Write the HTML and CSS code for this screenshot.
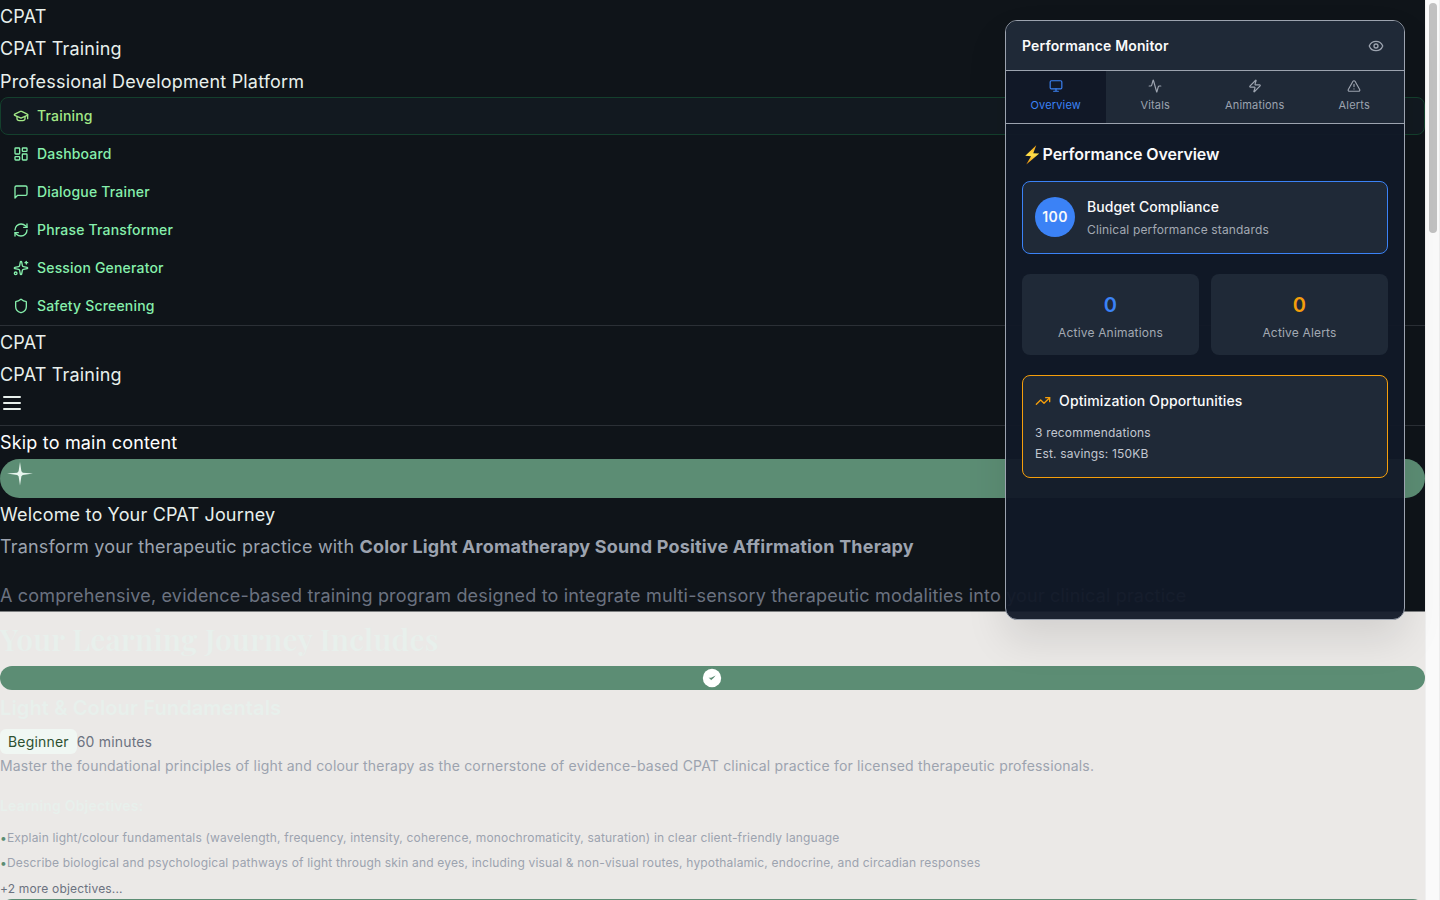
FILE: index.html
```html
<!DOCTYPE html>
<html lang="en">
<head>
<meta charset="utf-8">
<title>CPAT Training</title>
<link rel="stylesheet" href="styles.css">
</head>
<body>
<div class="shell">
  <div class="page">
    <div class="dark">
      <header class="top">
        <div class="line">CPAT</div>
        <div class="line">CPAT Training</div>
        <div class="line tagline">Professional Development Platform</div>
        <nav class="nav">
          <a class="item active"><svg class="ico" viewBox="0 0 24 24"><path d="M21.42 10.922a1 1 0 0 0-.019-1.838L12.83 5.18a2 2 0 0 0-1.66 0L2.6 9.08a1 1 0 0 0 0 1.832l8.57 3.908a2 2 0 0 0 1.66 0z"/><path d="M22 10v6"/><path d="M6 12.5V16a6 3 0 0 0 12 0v-3.5"/></svg>Training</a>
          <a class="item"><svg class="ico" viewBox="0 0 24 24"><rect width="7" height="9" x="3" y="3" rx="1"/><rect width="7" height="5" x="14" y="3" rx="1"/><rect width="7" height="9" x="14" y="12" rx="1"/><rect width="7" height="5" x="3" y="16" rx="1"/></svg>Dashboard</a>
          <a class="item"><svg class="ico" viewBox="0 0 24 24"><path d="M21 15a2 2 0 0 1-2 2H7l-4 4V5a2 2 0 0 1 2-2h14a2 2 0 0 1 2 2z"/></svg>Dialogue Trainer</a>
          <a class="item"><svg class="ico" viewBox="0 0 24 24"><path d="M3 12a9 9 0 0 1 9-9 9.75 9.75 0 0 1 6.74 2.74L21 8"/><path d="M21 3v5h-5"/><path d="M21 12a9 9 0 0 1-9 9 9.75 9.75 0 0 1-6.74-2.74L3 16"/><path d="M8 16H3v5"/></svg>Phrase Transformer</a>
          <a class="item"><svg class="ico" viewBox="0 0 24 24"><path d="M11.017 2.814a1 1 0 0 1 1.966 0l1.051 5.558a2 2 0 0 0 1.594 1.594l5.558 1.051a1 1 0 0 1 0 1.966l-5.558 1.051a2 2 0 0 0-1.594 1.594l-1.051 5.558a1 1 0 0 1-1.966 0l-1.051-5.558a2 2 0 0 0-1.594-1.594l-5.558-1.051a1 1 0 0 1 0-1.966l5.558-1.051a2 2 0 0 0 1.594-1.594z"/><path d="M20 2v4"/><path d="M22 4h-4"/><circle cx="4" cy="20" r="2"/></svg>Session Generator</a>
          <a class="item"><svg class="ico" viewBox="0 0 24 24"><path d="M20 13c0 5-3.500 7.500-7.660 8.950a1 1 0 0 1-.67-.01C7.500 20.500 4 18 4 13V6a1 1 0 0 1 1-1c2 0 4.500-1.200 6.240-2.720a1.170 1.170 0 0 1 1.520 0C14.510 3.810 17 5 19 5a1 1 0 0 1 1 1z"/></svg>Safety Screening</a>
        </nav>
      </header>
      <header class="mobile">
        <div class="line">CPAT</div>
        <div class="line">CPAT Training</div>
        <svg class="burger" viewBox="0 0 24 24"><path d="M4 6h16M4 12h16M4 18h16"/></svg>
      </header>
      <a class="line skip">Skip to main content</a>
      <div class="hero-bar"><svg class="spark" viewBox="0 0 40 32"><path d="M20 3L21.400 12.300L22.800 13.700L33 14.600L22.800 15.900L21.400 17.300L20 26.500L18.600 17.300L17.200 15.900L7 14.600L17.200 13.700L18.600 12.300Z"/></svg></div>
      <div class="line welcome">Welcome to Your CPAT Journey</div>
      <div class="line lead">Transform your therapeutic practice with <strong>Color Light Aromatherapy Sound Positive Affirmation Therapy</strong></div>
      <div class="line sub">A comprehensive, evidence-based training program designed to integrate multi-sensory therapeutic modalities into your clinical practice</div>
    </div>
    <main class="light">
      <h2 class="title">Your Learning Journey Includes</h2>
      <div class="check-bar"><svg class="check" viewBox="0 0 20 20"><circle cx="10" cy="10" r="9.200"/><path d="M6.500 9.700L9.100 9.800L13.600 7.600L11.800 9.800L9 12.200L8.300 10.900Z"/></svg></div>
      <h3 class="module">Light &amp; Colour Fundamentals</h3>
      <div class="meta"><span class="badge">Beginner</span><span class="time">60 minutes</span></div>
      <p class="desc">Master the foundational principles of light and colour therapy as the cornerstone of evidence-based CPAT clinical practice for licensed therapeutic professionals.</p>
      <h4 class="obj-title">Learning Objectives:</h4>
      <div class="obj"><span class="dot">•</span><span>Explain light/colour fundamentals (wavelength, frequency, intensity, coherence, monochromaticity, saturation) in clear client-friendly language</span></div>
      <div class="obj"><span class="dot">•</span><span>Describe biological and psychological pathways of light through skin and eyes, including visual &amp; non-visual routes, hypothalamic, endocrine, and circadian responses</span></div>
      <div class="more">+2 more objectives...</div>
      <div class="button"></div>
    </main>
  </div>
  <div class="scroll"><div class="thumb"></div></div>
</div>

<aside class="monitor">
  <div class="m-head"><span>Performance Monitor</span><svg class="eye" viewBox="0 0 24 24"><path d="M2.062 12.348a1 1 0 0 1 0-.696 10.750 10.750 0 0 1 19.876 0 1 1 0 0 1 0 .696 10.750 10.750 0 0 1-19.876 0"/><circle cx="12" cy="12" r="3"/></svg></div>
  <div class="tabs">
    <div class="tab on"><svg class="ti" viewBox="0 0 24 24"><rect width="20" height="14" x="2" y="3" rx="2"/><path d="M8 21h8M12 17v4"/></svg>Overview</div>
    <div class="tab"><svg class="ti" viewBox="0 0 24 24"><path d="M22 12h-2.480a2 2 0 0 0-1.930 1.460l-2.350 8.360a.25.25 0 0 1-.48 0L9.240 2.180a.25.25 0 0 0-.48 0l-2.350 8.360A2 2 0 0 1 4.490 12H2"/></svg>Vitals</div>
    <div class="tab"><svg class="ti" viewBox="0 0 24 24"><path d="M4 14a1 1 0 0 1-.78-1.630l9.900-10.200a.5.5 0 0 1 .86.46l-1.920 6.020A1 1 0 0 0 13 10h7a1 1 0 0 1 .78 1.630l-9.900 10.200a.5.5 0 0 1-.86-.46l1.920-6.020A1 1 0 0 0 11 14z"/></svg>Animations</div>
    <div class="tab"><svg class="ti" viewBox="0 0 24 24"><path d="m21.730 18-8-14a2 2 0 0 0-3.480 0l-8 14A2 2 0 0 0 4 21h16a2 2 0 0 0 1.730-3"/><path d="M12 9v4M12 17h.01"/></svg>Alerts</div>
  </div>
  <div class="m-body">
    <div class="m-title"><svg class="bolt" viewBox="0 0 20 20"><defs><linearGradient id="g" x1="0" y1="0" x2="0" y2="1"><stop offset="0" stop-color="#f59e0b"/><stop offset=".5" stop-color="#ffe14d"/><stop offset="1" stop-color="#f08a00"/></linearGradient></defs><path d="M14 .3L3 10.800L8.800 11.300L4 19.600L17 8.600L11 8.300Z" fill="url(#g)"/></svg>Performance Overview</div>
    <div class="card budget"><div class="score">100</div><div><div class="c-title">Budget Compliance</div><div class="c-sub">Clinical performance standards</div></div></div>
    <div class="stats">
      <div class="stat"><div class="num blue">0</div><div class="lab">Active Animations</div></div>
      <div class="stat"><div class="num amber">0</div><div class="lab">Active Alerts</div></div>
    </div>
    <div class="card opt">
      <div class="o-head"><svg class="trend" viewBox="0 0 24 24"><path d="M16 7h6v6"/><path d="m22 7-8.500 8.500-5-5L2 17"/></svg>Optimization Opportunities</div>
      <div class="o-line">3 recommendations</div>
      <div class="o-line">Est. savings: 150KB</div>
    </div>
  </div>
</aside>
</body>
</html>
```
FILE: styles.css
```css
* { box-sizing: border-box; }
html, body { margin: 0; height: 900px; overflow: hidden; }
body { font-family: Inter, sans-serif; font-size: 18px; line-height: 32.4px; letter-spacing: 0.18px; background: #fafafa; }
svg { fill: none; stroke: currentColor; stroke-width: 2; stroke-linecap: round; stroke-linejoin: round; flex: none; }

.shell { display: grid; grid-template-columns: 1425px 15px; height: 900px; overflow: hidden; }
.page { overflow: hidden; height: 900px; background: #ebe9e7; }
.dark { background: #0f1419; color: #e8f0ec; height: 612px; border-bottom: 1px solid #7d7f81; }
.line { display: block; height: 32.4px; padding-top: 0.6px; white-space: nowrap; }
.tagline { padding-top: 1.2px; }
.top { border-bottom: 1px solid #2b3036; }
.item { display: flex; align-items: center; gap: 8px; height: 38px; padding: 0 12px; border: 1px solid transparent; border-radius: 8px; font-size: 14px; font-weight: 500; color: #86efac; }
.item.active { background: #121920; border-color: #14402d; color: #a3e987; }
.ico { width: 16px; height: 16px; }
.mobile { height: 100px; border-bottom: 1px solid #2b3036; }
.burger { display: block; width: 24px; height: 24px; }
.skip { color: #fff; }
.hero-bar { height: 39.6px; border-radius: 20px; background: #5c8d74; display: flex; }
.spark { width: 40px; height: 32px; fill: #e8f5ee; stroke: none; }
.lead { color: #9ca3af; padding-top: 0; }
.lead strong { font-weight: 700; }
.sub { color: #6b7280; margin-top: 16.4px; }

.title { margin: 0; padding-top: 7.4px; height: 53.6px; font-family: "Playfair Display", "Liberation Serif", serif; font-size: 30px; line-height: 40px; font-weight: 600; color: #e8f0ec; white-space: nowrap; }
.check-bar { height: 24px; border-radius: 12px; background: #5c8d74; display: flex; justify-content: center; align-items: center; padding-right: 1px; }
.check { width: 20px; height: 20px; stroke: none; fill: #5c8d74; }
.check circle { fill: #fff; }
.module { margin: 0; padding-top: 0.6px; height: 39.4px; font-size: 20px; line-height: 36px; font-weight: 600; letter-spacing: 0.13px; color: #e8f0ec; }
.meta { display: flex; align-items: center; height: 25px; font-size: 14px; line-height: 25px; }
.badge { padding: 0 8px; border-radius: 6px; background: #f0f7f3; color: #2d5030; }
.time { color: #6b7280; }
.desc { margin: 0; height: 38.8px; font-size: 14px; line-height: 24px; color: #9ca3af; white-space: nowrap; }
.obj-title { margin: 0; height: 32px; font-size: 14px; line-height: 25px; font-weight: 600; color: #e8f0ec; }
.obj { display: flex; height: 25.2px; font-size: 12px; line-height: 25px; color: #9ca3af; white-space: nowrap; }
.dot { color: #5c8d74; }
.more { height: 23.4px; padding-top: 0.8px; font-size: 12px; line-height: 25px; color: #6b7280; }
.button { height: 40px; border-radius: 12px; background: #5c8d74; }

.scroll { background: #fafafa; border-left: 1px solid #f0f0f0; border-right: 1px solid #ededed; padding: 3px 2px 0 3px; }
.thumb { width: 8px; height: 230px; border-radius: 4px; background: #c1c1c1; }

.monitor { position: absolute; left: 1005px; top: 20px; width: 400px; height: 600px; border: 1px solid #9ca3af; border-radius: 12px; overflow: hidden; background: rgba(17, 24, 39, 0.95); box-shadow: 0 20px 40px rgba(0, 0, 0, 0.1); color: #f9fafb; }
.m-head { display: flex; align-items: center; justify-content: space-between; height: 50px; padding: 1px 20px 0 16px; background: #1f2937; border-bottom: 1px solid #9ca3af; font-size: 14px; font-weight: 600; letter-spacing: 0.14px; }
.eye { width: 16px; height: 16px; color: #9ca3af; }
.tabs { display: grid; grid-template-columns: repeat(4, 1fr); height: 53px; background: #1f2937; border-bottom: 1px solid #9ca3af; }
.tab { display: flex; flex-direction: column; align-items: center; padding-top: 8px; gap: 4px; font-size: 11px; line-height: 17px; color: #9ca3af; }
.tab.on { background: #111827; color: #3b82f6; }
.ti { width: 14px; height: 14px; }
.m-body { padding: 16px; }
.m-title { display: flex; align-items: center; height: 29px; font-size: 16px; font-weight: 600; letter-spacing: -0.07px; }
.bolt { width: 20.5px; height: 20px; stroke: none; }
.card { border: 1px solid #3b82f6; border-radius: 8px; background: #1f2937; }
.budget { display: flex; align-items: center; gap: 12px; margin-top: 12px; height: 72.6px; padding: 0 12px; }
.score { width: 40px; height: 40px; border-radius: 50%; background: #3b82f6; text-align: center; font-size: 14px; line-height: 40px; font-weight: 600; letter-spacing: 0.4px; }
.c-title { font-size: 14px; line-height: 25px; font-weight: 500; letter-spacing: 0.04px; }
.c-sub { font-size: 12px; line-height: 21px; letter-spacing: 0.15px; color: #a3a9b3; }
.stats { display: grid; grid-template-columns: 1fr 1fr; gap: 12px; margin-top: 20px; }
.stat { height: 81.4px; padding-top: 13px; border-radius: 8px; background: #1f2937; text-align: center; }
.num { font-size: 20px; line-height: 36px; font-weight: 600; }
.blue { color: #3b82f6; }
.amber { color: #f59e0b; }
.lab { font-size: 12px; line-height: 20px; color: #a3a9b3; }
.opt { margin-top: 20px; height: 102.6px; padding: 12.6px 12px; border-color: #f59e0b; }
.o-head { display: flex; align-items: center; gap: 8px; height: 25px; margin-bottom: 8px; font-size: 14px; font-weight: 500; letter-spacing: 0.15px; }
.trend { width: 16px; height: 16px; color: #f59e0b; }
.o-line { font-size: 12px; line-height: 21px; color: #c2c7d0; }
```
